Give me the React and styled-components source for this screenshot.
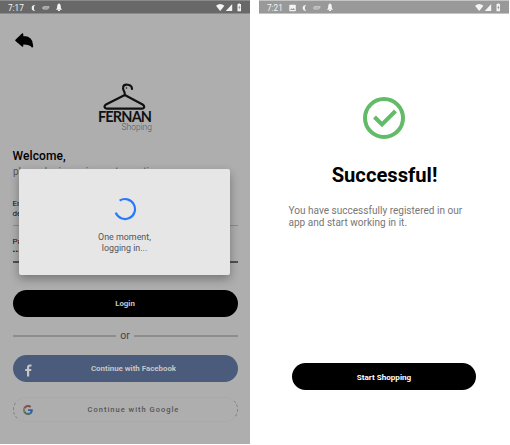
import React from "react";
import styled, { createGlobalStyle } from "styled-components";

const Global = createGlobalStyle`
  * { box-sizing: border-box; }
  body { margin: 0; background: #fff; font-family: Roboto, "Liberation Sans", sans-serif; }
`;

const Page = styled.main`
  display: flex;
  gap: 9px;
  width: 510px;
  height: 445px;
  overflow: hidden;
`;

const Phone = styled.section`
  position: relative;
  display: flex;
  flex-direction: column;
  width: 250px;
  height: 444px;
  background: ${(p) => p.$bg};
`;

const StatusBar = styled.header`
  display: flex;
  align-items: center;
  justify-content: space-between;
  height: 14px;
  padding: 1px 8px 0;
  background: ${(p) => p.$bg};
  border-top: 1px solid ${(p) => p.$edge};
  border-bottom: 1px solid ${(p) => p.$edge};
  color: ${(p) => p.$fg};
  font-size: 8.2px;
  line-height: 12px;
`;

const StatusGroup = styled.div`
  display: flex;
  align-items: center;
  height: 11px;
  gap: ${(p) => p.$gap}px;
`;

const Clock = styled.span`
  width: ${(p) => p.$width}px;
  white-space: nowrap;
`;

const Back = styled.button`
  width: 19px;
  height: 16px;
  margin: 19px 0 0 15px;
  padding: 0;
  border: 0;
  background: none;
  svg { display: block; }
`;

const Brand = styled.div`
  display: flex;
  flex-direction: column;
  width: 54px;
  margin: 33px 0 0 98px;
  svg { display: block; margin-left: 5px; }
`;

const BrandName = styled.div`
  height: 13px;
  font: 700 14.5px/13px Lato, sans-serif;
  letter-spacing: -0.85px;
  white-space: nowrap;
  color: #111;
`;

const BrandTag = styled.div`
  align-self: flex-end;
  font-size: 8.5px;
  font-weight: 300;
  line-height: 9px;
  color: #555;
`;

const Title = styled.h1`
  margin: 17px 0 0 12.5px;
  font-size: 12px;
  font-weight: 500;
  line-height: 15px;
  letter-spacing: 0.1px;
  color: #000;
`;

const Lead = styled.p`
  margin: 1px 0 0 13px;
  font-size: 10px;
  line-height: 13px;
  color: #555;
  white-space: nowrap;
`;

const Field = styled.label`
  display: flex;
  flex-direction: column;
  width: 225px;
  height: ${(p) => p.$height}px;
  margin: ${(p) => p.$top}px 0 0 12.5px;
  font-size: 8px;
  line-height: 10px;
  color: #111;
  border-bottom: ${(p) => p.$line};
`;

const Pill = styled.button`
  display: flex;
  align-items: center;
  justify-content: center;
  flex: none;
  position: relative;
  width: ${(p) => p.$width}px;
  height: ${(p) => p.$height}px;
  margin: ${(p) => p.$margin};
  padding: 0;
  border: ${(p) => p.$border || "0"};
  border-radius: 14px;
  background: ${(p) => p.$bg};
  color: ${(p) => p.$fg};
  font: ${(p) => p.$weight || 700} ${(p) => p.$size || 7.9}px/10px Roboto, sans-serif;
  letter-spacing: ${(p) => p.$spacing || 0}px;
`;

const OutlinePill = styled(Pill)`
  border: 1px solid #a9a9a9;
  border-left: 1px dashed #808080;
  border-right: 1px dashed #808080;
`;

const PillLabel = styled.span`
  padding-left: ${(p) => p.$shift || 0}px;
  white-space: nowrap;
`;

const PillIcon = styled.span`
  position: absolute;
  left: ${(p) => p.$left}px;
  top: ${(p) => p.$top}px;
  svg { display: block; }
`;

const Divider = styled.div`
  display: flex;
  align-items: center;
  gap: 4px;
  width: 225px;
  height: 14px;
  margin: 12px 0 0 12.5px;
  font-size: 10.5px;
  line-height: 12px;
  color: #444;
`;

const Rule = styled.span`
  flex: 1;
  height: 2px;
  background: #8d8d8d;
`;

const Dialog = styled.div`
  position: absolute;
  left: 19px;
  top: 169px;
  width: 211px;
  height: 106px;
  display: flex;
  flex-direction: column;
  align-items: center;
  padding-top: 28px;
  border-radius: 2px;
  background: #e6e6e6;
  box-shadow: 0 4px 10px rgba(0, 0, 0, 0.32);
  color: #555;
  font-size: 8.9px;
  line-height: 10.7px;
  text-align: center;
  svg { display: block; margin-bottom: 11px; }
`;

const Success = styled.div`
  display: flex;
  flex-direction: column;
  svg { display: block; margin: 83px 0 0 104px; }
`;

const SuccessTitle = styled.h2`
  margin: 24px 0 0;
  padding-left: 1px;
  text-align: center;
  font-size: 20.2px;
  font-weight: 700;
  line-height: 24px;
  color: #000;
`;

const Message = styled.p`
  height: 24px;
  margin: 18px 0 0 29.5px;
  font-size: 10.05px;
  line-height: 11.6px;
  color: #777;
  white-space: nowrap;
`;

const Moon = () => (
  <svg width="5" height="8" viewBox="0 0 5 8"><path d="M4.2.8Q.6 1.300.7 4T4.200 7.200Q2.800 5.700 2.800 4T4.200.8Z" fill="currentColor" /></svg>
);
const Badge = () => (
  <svg width="8" height="8" viewBox="0 0 8 8" opacity=".65"><path d="M.5 3 2 2.2h5.500L7 4.300 5.500 5.500h-4L.4 4.800Z" fill="currentColor" /><path d="M1.500 4h5" stroke="#777" strokeWidth=".7" /></svg>
);
const Bell = () => (
  <svg width="6" height="9" viewBox="0 0 6 9"><path d="M3 .5c1.800.4 1.700 2.200 1.900 4.400L6 6.800H0l1.100-1.900C1.300 2.700 1.200.9 3 .5ZM2 7h2v1H2Z" fill="currentColor" /></svg>
);
const Picture = () => (
  <svg width="7" height="8" viewBox="0 0 7 8"><rect x=".3" y=".8" width="6.5" height="6.4" rx=".8" fill="currentColor" /><path d="m1 5.900 1.500-1.600 1 1L4.700 4 6 5.900Z" fill="#999" /></svg>
);
const Signals = () => (
  <svg width="26" height="9" viewBox="0 0 26 9" fill="currentColor">
    <path d="M0 2.800Q4.200-.6 8.400 2.800L4.200 8Z" />
    <path d="M16.200 1v7H9.800Z" />
    <path d="M21.500 1h1V.4h1.500V1h1v7.200H21.500Z" />
    <path d="m23.600 2.300-1.200 2.500h1l-.2 2 1.200-2.600h-.9Z" fill="#777" />
  </svg>
);
const ReplyArrow = () => (
  <svg width="19" height="16" viewBox="0 0 19 16"><path d="M7.500 1V3.800C14 3.700 17.800 6.500 17.300 13.800 15.500 11.200 12.500 10.500 7.500 10.700V13L1 7.400Z" stroke="#000" strokeWidth="1.600" strokeLinejoin="round" /></svg>
);
const Hanger = () => (
  <svg width="43" height="28" viewBox="0 0 43 28" fill="none" stroke="#111" strokeLinecap="round" strokeLinejoin="round">
    <path d="M29 7C29 2 20.800 1.300 20.100 5.200C19.300 8.700 22.300 8.800 21.800 12.500" strokeWidth="2.200" />
    <path d="M21.800 13 3 22.500C.6 24 1.300 26.600 3.800 26.600H38.800C41.600 26.600 42 24 39.600 22.500L21.800 13" strokeWidth="2.200" />
    <circle cx="23.500" cy="6" r=".8" fill="#111" stroke="none" />
  </svg>
);
const Spinner = () => (
  <svg width="24" height="24" viewBox="0 0 24 24"><path d="M6.600 3.600A10 10 0 1 1 2.700 15.700" fill="none" stroke="#2979ff" strokeWidth="2.200" /></svg>
);
const FacebookMark = () => (
  <svg width="8" height="13" viewBox="0 0 8 13"><path d="M2 12.400V7H.2V5H2V3.500C2 1.400 3.200.6 5 .6h1.500v2H5.400c-.9 0-1.200.4-1.200 1.200V5h2.200l-.3 2H4.200v5.400Z" fill="#c6c6c6" /></svg>
);
const GoogleMark = () => (
  <svg width="10" height="10" viewBox="0 0 48 48">
    <path fill="#7d514d" d="M24 9.500c3.500 0 6.700 1.200 9.200 3.600l6.900-6.900C35.900 2.400 30.500 0 24 0 14.600 0 6.500 5.400 2.600 13.200l8 6.200C12.400 13.700 17.700 9.500 24 9.500z" />
    <path fill="#315fa5" d="M47 24.600c0-1.600-.2-3.100-.4-4.600H24v9h12.900c-.6 3-2.200 5.500-4.700 7.200l7.700 6C44.400 38 47 32 47 24.600z" />
    <path fill="#857a58" d="M10.500 28.600a14.500 14.500 0 0 1 0-9.200l-8-6.200a24 24 0 0 0 0 21.600z" />
    <path fill="#4d6c63" d="M24 48c6.500 0 11.900-2.100 15.900-5.800l-7.700-6c-2.200 1.500-4.900 2.300-8.200 2.300-6.300 0-11.600-4.200-13.500-9.900l-8 6.200C6.500 42.600 14.600 48 24 48z" />
  </svg>
);
const Check = () => (
  <svg width="42" height="42" viewBox="0 0 42 42" fill="none" stroke="#62bb68">
    <circle cx="21" cy="21" r="19" strokeWidth="4" />
    <path d="m11.500 20 7.500 7.500L32.500 14" strokeWidth="4" />
  </svg>
);

const LoginScreen = () => (
  <Phone $bg="#aeaeae">
    <StatusBar $bg="#686868" $edge="#8b8b8b" $fg="#f4f4f4">
      <StatusGroup $gap={6}><Clock $width={17}>7:17</Clock><Moon /><Badge /><Bell /></StatusGroup>
      <Signals />
    </StatusBar>
    <Back aria-label="Back"><ReplyArrow /></Back>
    <Brand><Hanger /><BrandName>FERNAN</BrandName><BrandTag>Shoping</BrandTag></Brand>
    <Title>Welcome,</Title>
    <Lead>please login or sign up to continue</Lead>
    <Field $top={21} $height={27} $line="1px solid #8b8b8b"><span>Email</span><span>demo@gmail.com</span></Field>
    <Field $top={11} $height={26} $line="2px solid #505050"><span>Password</span><span>••••••••</span></Field>
    <Pill $width={225} $height={27} $margin="27px 0 0 12.5px" $bg="#000" $fg="#c8c8c8">Login</Pill>
    <Divider><Rule />or<Rule /></Divider>
    <Pill $width={225} $height={27} $margin="12px 0 0 12.5px" $bg="#4a5b7c" $fg="#c6c6c6">
      <PillIcon $left={12} $top={9}><FacebookMark /></PillIcon>
      <PillLabel $shift={17}>Continue with Facebook</PillLabel>
    </Pill>
    <OutlinePill $width={225} $height={25} $margin="15px 0 0 12.5px" $bg="transparent" $fg="#555" $weight={500} $size={7.5} $spacing={1}>
      <PillIcon $left={9.5} $top={6.5}><GoogleMark /></PillIcon>
      <PillLabel $shift={17}>Continue with Google</PillLabel>
    </OutlinePill>
    <Dialog role="dialog"><Spinner /><span>One moment,</span><span>logging in...</span></Dialog>
  </Phone>
);

const SuccessScreen = () => (
  <Phone $bg="#fff">
    <StatusBar $bg="#999" $edge="#c4c4c4" $fg="#f4f4f4">
      <StatusGroup $gap={6}><Clock $width={16}>7:21</Clock><Picture /><Moon /><Badge /><Bell /></StatusGroup>
      <Signals />
    </StatusBar>
    <Success>
      <Check />
      <SuccessTitle>Successful!</SuccessTitle>
      <Message>You have successfully registered in our<br />app and start working in it.</Message>
      <Pill $width={184} $height={27} $margin="134px 0 0 33px" $bg="#000" $fg="#fff" $size={8.1}>Start Shopping</Pill>
    </Success>
  </Phone>
);

export default function App() {
  return (
    <>
      <Global />
      <Page><LoginScreen /><SuccessScreen /></Page>
    </>
  );
}
